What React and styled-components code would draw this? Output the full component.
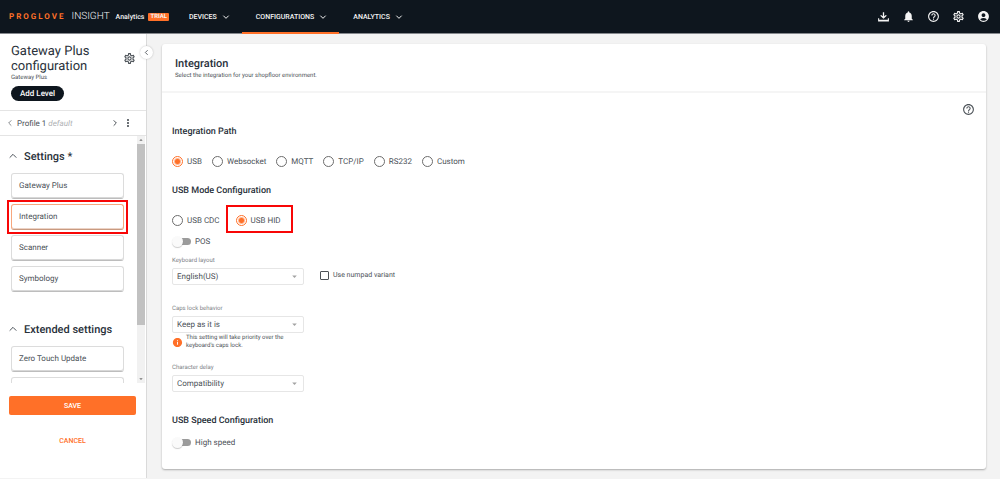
import React, { useState } from "react";
import styled, { createGlobalStyle, css } from "styled-components";
import {
  MdOutlineSettings,
  MdNotifications,
  MdHelpOutline,
  MdAccountCircle,
  MdMoreVert,
  MdInfo,
  MdArrowDropDown,
  MdArrowDropUp,
} from "react-icons/md";

const ink = "#0e161e";
const orange = "#ff7028";
const text = "#4b5157";
const heading = "#29313a";
const line = "#e4e4e4";
const mark = "#f80606";

const Global = createGlobalStyle`
  *, *::before, *::after { box-sizing: border-box; }
  body { margin: 0; background: #f3f3f3; font-family: Roboto, "Liberation Sans", sans-serif; font-size: 8px; color: ${text}; text-rendering: geometricPrecision; }
  button, select, input { font: inherit; color: inherit; margin: 0; text-rendering: inherit; }
  button { border: 0; padding: 0; background: none; cursor: pointer; }
  h1, h2, h3, p, ul { margin: 0; padding: 0; font-weight: 400; }
  ul { list-style: none; }
  svg { display: block; }
`;

const Shell = styled.div`
  display: flex;
  flex-direction: column;
  height: 100vh;
`;

const TopBar = styled.header`
  display: flex;
  align-items: center;
  flex: none;
  height: 34px;
  padding: 0 10px 0 9px;
  background: ${ink};
  border-bottom: 1px solid #85888d;
  color: #f4f4f4;
`;

const Brand = styled.a`
  display: flex;
  align-items: center;
  width: 166px;
  color: inherit;
  text-decoration: none;
  white-space: nowrap;
`;

const BrandName = styled.span`
  color: ${orange};
  font-size: 8px;
  font-weight: 700;
  letter-spacing: 2px;
`;

const BrandProduct = styled.span`
  margin-left: 6px;
  font-size: 10px;
  font-weight: 300;
`;

const BrandPlan = styled.span`
  margin-left: 6px;
  font-size: 7px;
  font-weight: 500;
`;

const TrialBadge = styled.span`
  margin-left: 4px;
  padding: 0 2px;
  background: ${orange};
  border-radius: 1px;
  font-size: 6px;
  font-weight: 700;
  line-height: 8px;
`;

const Nav = styled.nav`
  display: flex;
  flex: 1;
  height: 33px;
`;

const NavItem = styled.button`
  position: relative;
  display: flex;
  align-items: center;
  gap: 5px;
  padding: 0 12px 0 14px;
  font-size: 7px;
  font-weight: 500;
  ${(p) =>
    p.$active &&
    css`
      &::after {
        content: "";
        position: absolute;
        left: 0;
        right: 0;
        bottom: -1px;
        height: 2px;
        background: ${orange};
      }
    `}
`;

const Tools = styled.div`
  display: flex;
  gap: 12px;
`;

const Body = styled.div`
  display: flex;
  flex: 1;
  min-height: 0;
`;

const Sidebar = styled.aside`
  position: relative;
  display: flex;
  flex-direction: column;
  flex: none;
  width: 147px;
  margin-bottom: 1px;
  background: #fff;
  border-right: 1px solid #dadada;
`;

const Collapse = styled.button`
  position: absolute;
  top: 12px;
  right: -7px;
  display: grid;
  place-items: center;
  width: 13px;
  height: 13px;
  border-radius: 50%;
  background: #fff;
  box-shadow: 0 0 2px rgba(0, 0, 0, 0.25);
`;

const DeviceHead = styled.div`
  display: flex;
  align-items: flex-start;
  justify-content: space-between;
  padding: 10px 10px 9px 11px;
  border-bottom: 1px solid ${line};
`;

const DeviceTitle = styled.h1`
  color: ${heading};
  font-size: 13px;
  line-height: 15px;
`;

const DeviceSub = styled.p`
  font-size: 6px;
  line-height: 8px;
`;

const AddLevel = styled.button`
  height: 15px;
  margin-top: 4px;
  padding: 0 9px;
  border-radius: 8px;
  background: ${ink};
  color: #fff;
  font-weight: 500;
`;

const GearButton = styled.button`
  margin-top: 8px;
`;

const ProfileRow = styled.div`
  display: flex;
  align-items: center;
  height: 25px;
  padding: 0 12px 0 6px;
  border-bottom: 1px solid ${line};
  gap: 3px;
`;

const ProfileName = styled.span`
  flex: 1;
  em {
    color: #aeb0b3;
  }
`;

const ScrollArea = styled.div`
  display: flex;
  flex: 1;
  min-height: 0;
  padding-right: 1px;
`;

const ScrollContent = styled.div`
  flex: 1;
  overflow-y: auto;
  scrollbar-width: none;
  padding: 14px 13px 0 0;
`;

const ScrollTrack = styled.div`
  display: flex;
  flex-direction: column;
  width: 8px;
  background: #f1f1f1;
  color: #707070;
`;

const ScrollThumb = styled.div`
  flex: 1;
  max-height: 181px;
  background: #c1c1c1;
`;

const ScrollEnd = styled.div`
  margin-top: auto;
`;

const Group = styled.section`
  margin-bottom: 31px;
`;

const GroupTitle = styled.button`
  display: flex;
  align-items: center;
  gap: 6px;
  padding-left: 8px;
  color: ${heading};
  font-size: 11px;
  font-weight: 500;
  line-height: 14px;
  svg {
    margin-bottom: 3px;
  }
`;

const GroupList = styled.ul`
  display: flex;
  flex-direction: column;
  gap: 5px;
  padding: 9px 0 0 11px;
`;

const Entry = styled.li`
  position: relative;
  ${(p) =>
    p.$marked &&
    css`
      &::after {
        content: "";
        position: absolute;
        inset: -4px;
        border: 2px solid ${mark};
        pointer-events: none;
      }
    `}
`;

const EntryButton = styled.button`
  display: block;
  width: 100%;
  height: 26px;
  padding: 0 7px 2px;
  background: #fff;
  border: 1px solid ${(p) => (p.$active ? "#f7a77e" : "#dcdcdc")};
  border-bottom-color: ${(p) => (p.$active ? "#c99a80" : "#bdbdbd")};
  border-radius: 3px;
  box-shadow: inset 0 -1px 0 ${(p) => (p.$active ? "#ecd3c6" : "#d8d8d8")};
  text-align: left;
`;

const SideActions = styled.div`
  display: flex;
  flex-direction: column;
  flex: none;
  gap: 16px;
  padding: 13px 10px 28px 9px;
`;

const ActionButton = styled.button`
  height: 19px;
  border-radius: 2px;
  background: ${(p) => (p.$primary ? orange : "transparent")};
  color: ${(p) => (p.$primary ? "#fff" : orange)};
  font-size: 7px;
  font-weight: 500;
`;

const Main = styled.main`
  flex: 1;
  min-width: 0;
  overflow: auto;
  scrollbar-width: none;
  padding: 10px 14px 9px 15px;
`;

const Panel = styled.section`
  background: #fff;
  border-radius: 3px;
  box-shadow: 0 1px 2px rgba(0, 0, 0, 0.3);
`;

const PanelHead = styled.div`
  padding: 12px 13px 10px;
  border-bottom: 2px solid #f5f5f5;
`;

const PanelTitle = styled.h2`
  color: ${heading};
  font-size: 11px;
  font-weight: 500;
  line-height: 15px;
`;

const PanelNote = styled.p`
  font-size: 6px;
  line-height: 10px;
`;

const PanelBody = styled.div`
  display: flex;
  flex-direction: column;
  padding: 10px 11px 21px 10px;
`;

const HelpButton = styled.button`
  align-self: flex-end;
`;

const SectionTitle = styled.h3`
  margin-top: ${(p) => p.$space}px;
  color: ${heading};
  font-size: 9px;
  font-weight: 500;
  line-height: 12px;
`;

const RadioRow = styled.div`
  display: flex;
  flex-wrap: wrap;
  gap: ${(p) => p.$gap}px;
  margin-top: 17px;
`;

const Choice = styled.label`
  position: relative;
  display: flex;
  align-items: center;
  gap: 4px;
  height: 12px;
  white-space: nowrap;
  ${(p) =>
    p.$marked &&
    css`
      &::after {
        content: "";
        position: absolute;
        inset: -9px -12px -7px -10px;
        border: 2px solid ${mark};
        pointer-events: none;
      }
    `}
`;

const Radio = styled.input`
  appearance: none;
  width: 11px;
  height: 11px;
  border: 1px solid #6c6c6c;
  border-radius: 50%;
  &:checked {
    border-color: ${orange};
    background: radial-gradient(circle, ${orange} 0 2px, transparent 4px);
  }
`;

const SwitchRow = styled.label`
  display: flex;
  align-items: center;
  align-self: flex-start;
  gap: 4px;
  height: 12px;
  margin-top: 9px;
`;

const Switch = styled.input`
  appearance: none;
  position: relative;
  width: 18px;
  height: 7px;
  margin: 0 0 0 1px;
  border-radius: 4px;
  background: #9b9b9b;
  &::before {
    content: "";
    position: absolute;
    top: -2px;
    left: ${(p) => (p.checked ? 8 : -1)}px;
    width: 11px;
    height: 11px;
    border-radius: 50%;
    background: #fafafa;
    box-shadow: 0 1px 1px rgba(0, 0, 0, 0.2);
  }
`;

const FieldRow = styled.div`
  display: flex;
  align-items: flex-end;
  gap: 16px;
  margin-top: ${(p) => p.$space}px;
`;

const Field = styled.div`
  width: 132px;
`;

const FieldLabel = styled.label`
  display: block;
  margin-bottom: 2px;
  color: #7d8286;
  font-size: 6px;
  line-height: 10px;
`;

const SelectBox = styled.div`
  display: grid;
  align-items: center;
  > * {
    grid-area: 1 / 1;
  }
  > svg {
    justify-self: end;
    margin-right: 4px;
    color: #a3a3a3;
    pointer-events: none;
  }
`;

const Select = styled.select`
  appearance: none;
  width: 100%;
  height: 17px;
  padding: 0 4px;
  background: #fff;
  border: 1px solid #e6e6e6;
  border-radius: 2px;
`;

const Hint = styled.p`
  display: flex;
  align-items: center;
  gap: 3px;
  margin-top: 1px;
  font-size: 6px;
  line-height: 8px;
  svg {
    flex: none;
    color: ${orange};
  }
`;

const HintText = styled.span`
  max-width: 108px;
`;

const CheckLabel = styled.label`
  display: flex;
  align-items: center;
  gap: 4px;
  height: 20px;
  font-size: 7px;
`;

const Checkbox = styled.input`
  appearance: none;
  width: 9px;
  height: 9px;
  border: 1px solid #4d5257;
  border-radius: 1px;
  &:checked {
    background: ${orange};
  }
`;

function Chevron({ dir = "down", size = 8, weight = 3 }) {
  const d = {
    down: "M4 8l8 8 8-8",
    up: "M4 16l8-8 8 8",
    left: "M16 4l-8 8 8 8",
    right: "M8 4l8 8-8 8",
  }[dir];
  return (
    <svg width={size} height={size} viewBox="0 0 24 24" fill="none" stroke="currentColor" strokeWidth={weight} aria-hidden="true">
      <path d={d} />
    </svg>
  );
}

function TrayDownload() {
  return (
    <svg width="13" height="13" viewBox="0 0 24 24" fill="currentColor" aria-hidden="true">
      <path d="M2 15h2v3h16v-3h2v6H2zM12 16l-6-5.500 1.500-1.500L10.800 11.500V4h2.400v7.500L16.500 9l1.500 1.500z" />
    </svg>
  );
}

const tools = [
  ["Downloads", TrayDownload],
  ["Notifications", MdNotifications],
  ["Help", MdHelpOutline],
  ["Settings", MdOutlineSettings],
  ["Account", MdAccountCircle],
];

const groups = [
  { title: "Settings *", items: ["Gateway Plus", "Integration", "Scanner", "Symbology"] },
  { title: "Extended settings", items: ["Zero Touch Update", ""] },
];

function SelectField({ id, label, options, hint }) {
  return (
    <Field>
      <FieldLabel htmlFor={id}>{label}</FieldLabel>
      <SelectBox>
        <Select id={id}>
          {options.map((o) => (
            <option key={o}>{o}</option>
          ))}
        </Select>
        <MdArrowDropDown size={11} />
      </SelectBox>
      {hint && (
        <Hint>
          <MdInfo size={11} />
          <HintText>{hint}</HintText>
        </Hint>
      )}
    </Field>
  );
}

function RadioGroup({ name, options, value, onChange, gap, marked }) {
  return (
    <RadioRow $gap={gap} role="radiogroup" aria-label={name}>
      {options.map((o) => (
        <Choice key={o} $marked={o === marked}>
          <Radio type="radio" name={name} checked={o === value} onChange={() => onChange(o)} />
          {o}
        </Choice>
      ))}
    </RadioRow>
  );
}

function ToggleRow({ label }) {
  const [on, setOn] = useState(false);
  return (
    <SwitchRow>
      <Switch type="checkbox" role="switch" checked={on} onChange={() => setOn(!on)} />
      {label}
    </SwitchRow>
  );
}

export default function App() {
  const [path, setPath] = useState("USB");
  const [mode, setMode] = useState("USB HID");
  const [entry, setEntry] = useState("Integration");
  return (
    <Shell>
      <Global />
      <TopBar>
        <Brand href="#">
          <BrandName>PROGLOVE</BrandName>
          <BrandProduct>INSIGHT</BrandProduct>
          <BrandPlan>Analytics</BrandPlan>
          <TrialBadge>TRIAL</TrialBadge>
        </Brand>
        <Nav>
          {["DEVICES", "CONFIGURATIONS", "ANALYTICS"].map((n) => (
            <NavItem key={n} $active={n === "CONFIGURATIONS"}>
              {n}
              <Chevron />
            </NavItem>
          ))}
        </Nav>
        <Tools>
          {tools.map(([label, Icon]) => (
            <button key={label} aria-label={label}>
              <Icon size={13} />
            </button>
          ))}
        </Tools>
      </TopBar>
      <Body>
        <Sidebar>
          <DeviceHead>
            <div>
              <DeviceTitle>
                Gateway Plus
                <br />
                configuration
              </DeviceTitle>
              <DeviceSub>Gateway Plus</DeviceSub>
              <AddLevel>Add Level</AddLevel>
            </div>
            <GearButton aria-label="Configuration settings">
              <MdOutlineSettings size={13} />
            </GearButton>
          </DeviceHead>
          <Collapse aria-label="Collapse sidebar">
            <Chevron dir="left" size={7} />
          </Collapse>
          <ProfileRow>
            <button aria-label="Previous profile">
              <Chevron dir="left" weight={2} />
            </button>
            <ProfileName>
              Profile 1 <em>default</em>
            </ProfileName>
            <button aria-label="Next profile">
              <Chevron dir="right" />
            </button>
            <button aria-label="Profile menu">
              <MdMoreVert size={12} />
            </button>
          </ProfileRow>
          <ScrollArea>
            <ScrollContent>
              {groups.map((g) => (
                <Group key={g.title}>
                  <GroupTitle>
                    <Chevron dir="up" weight={2} size={10} />
                    {g.title}
                  </GroupTitle>
                  <GroupList>
                    {g.items.map((i) => (
                      <Entry key={i} $marked={i === "Integration"}>
                        <EntryButton $active={i === entry} onClick={() => setEntry(i)}>
                          {i}
                        </EntryButton>
                      </Entry>
                    ))}
                  </GroupList>
                </Group>
              ))}
            </ScrollContent>
            <ScrollTrack aria-hidden="true">
              <MdArrowDropUp size={8} />
              <ScrollThumb />
              <ScrollEnd>
                <MdArrowDropDown size={8} />
              </ScrollEnd>
            </ScrollTrack>
          </ScrollArea>
          <SideActions>
            <ActionButton $primary>SAVE</ActionButton>
            <ActionButton>CANCEL</ActionButton>
          </SideActions>
        </Sidebar>
        <Main>
          <Panel>
            <PanelHead>
              <PanelTitle>Integration</PanelTitle>
              <PanelNote>Select the integration for your shopfloor environment.</PanelNote>
            </PanelHead>
            <PanelBody>
              <HelpButton aria-label="Integration help">
                <MdHelpOutline size={13} />
              </HelpButton>
              <SectionTitle $space={10}>Integration Path</SectionTitle>
              <RadioGroup
                name="Integration path"
                options={["USB", "Websocket", "MQTT", "TCP/IP", "RS232", "Custom"]}
                value={path}
                onChange={setPath}
                gap={10}
              />
              <SectionTitle $space={18}>USB Mode Configuration</SectionTitle>
              <RadioGroup
                name="USB mode"
                options={["USB CDC", "USB HID"]}
                value={mode}
                onChange={setMode}
                gap={16}
                marked="USB HID"
              />
              <ToggleRow label="POS" />
              <FieldRow $space={9}>
                <SelectField id="layout" label="Keyboard layout" options={["English(US)", "German"]} />
                <CheckLabel>
                  <Checkbox type="checkbox" />
                  Use numpad variant
                </CheckLabel>
              </FieldRow>
              <FieldRow $space={19}>
                <SelectField
                  id="caps"
                  label="Caps lock behavior"
                  options={["Keep as it is", "Off"]}
                  hint="This setting will take priority over the keyboard's caps lock."
                />
              </FieldRow>
              <FieldRow $space={13}>
                <SelectField id="delay" label="Character delay" options={["Compatibility", "Fast"]} />
              </FieldRow>
              <SectionTitle $space={23}>USB Speed Configuration</SectionTitle>
              <ToggleRow label="High speed" />
            </PanelBody>
          </Panel>
        </Main>
      </Body>
    </Shell>
  );
}
